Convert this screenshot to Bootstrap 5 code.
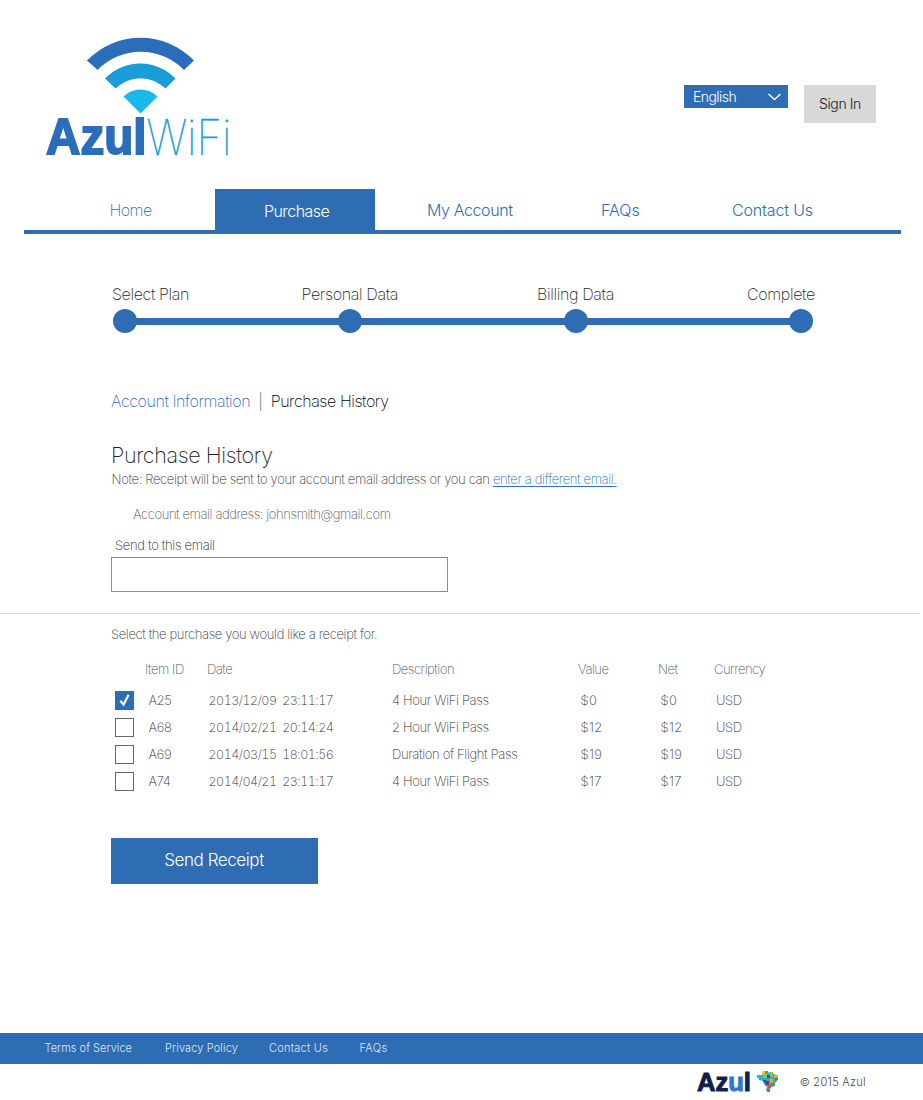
<!DOCTYPE html>
<html lang="en">
<head>
<meta charset="utf-8">
<meta name="viewport" content="width=device-width, initial-scale=1">
<title>Azul WiFi – Purchase History</title>
<link href="https://cdn.jsdelivr.net/npm/bootstrap@5.3.0/dist/css/bootstrap.min.css" rel="stylesheet">
<script src="https://cdn.jsdelivr.net/npm/bootstrap@5.3.0/dist/js/bootstrap.bundle.min.js"></script>
<style>
  :root { --azul: #2e6db4; }
  body { font: 200 13px/20px Inter, "Liberation Sans", sans-serif; letter-spacing: -.34px; color: #222; min-height: 1100px; }
  svg { overflow: visible; }
  .site-header { height: 189px; padding: 36px 47px 0 44px; }
  .lang-btn { width: 104px; height: 23px; background: var(--azul); color: #fff; font-size: 14px; font-weight: 300; letter-spacing: -.55px; padding: 0 6px 1px 9px; border: 0; border-radius: 0; margin-top: 49px; }
  .sign-btn { width: 72px; height: 38px; background: #d8d8d8; color: #222; font-size: 14px; font-weight: 300; letter-spacing: -.38px; border: 0; border-radius: 0; padding: 0 0 2px 0; margin-top: 49px; }
  .main-nav { height: 45px; margin: 0 22px 0 24px; border-bottom: 4px solid var(--azul); }
  .main-nav .nav-link { padding: 10px 0 0; font-size: 16px; line-height: 22px; font-weight: 300; color: var(--azul); }
  .nav-home { width: 191px; text-indent: 85.5px; font-weight: 200 !important; letter-spacing: -.57px; }
  .nav-purchase { width: 160px; background: var(--azul); text-indent: 49px; letter-spacing: -.56px; padding-top: 11px !important; color: #fff !important; }
  .nav-account { width: 226px; text-indent: 52px; letter-spacing: -.4px; }
  .nav-faq { width: 131px; letter-spacing: .05px; }
  .nav-contact { letter-spacing: -.15px; }
  .steps { margin: 49px 110px 0 112px; }
  .step-labels { display: grid; grid-template-columns: 189.5px 235.5px 210px auto; font-size: 16px; line-height: 22px; }
  .step-labels span { letter-spacing: -.35px; }
  .step-track { height: 24px; margin: 4px 0 0 1px; background: linear-gradient(var(--azul), var(--azul)) 12px 9px / 676px 7px no-repeat; width: 700px; }
  .step-dot { width: 24px; height: 24px; border-radius: 50%; background: var(--azul); }
  .page-body { padding: 0 110px 0 111px; }
  .sub-nav { font-size: 16px; line-height: 22px; margin-top: 57px; letter-spacing: -.42px; }
  .sub-sep { width: 20.5px; padding-left: 8px; color: #444; opacity: .9; }
  .link-azul { color: #2e6dc4; }
  .page-title { font-size: 21.5px; line-height: 28px; font-weight: 200; margin: 29px 0 0; letter-spacing: -.36px; }
  .note { margin: 0 0 0 .5px; letter-spacing: -.325px; color: #333; }
  .note a { letter-spacing: -.36px; text-underline-offset: 2px; }
  .account-line { margin: 15px 0 0 22px; color: #555; letter-spacing: -.395px; }
  .email-label { margin: 11px 0 0 4px; letter-spacing: -.3px; }
  .email-input { width: 337px; height: 35px; border: 1px solid #8b8b8b; border-radius: 0; margin-top: 2px; }
  .divider { height: 1px; background: #dcdcdc; margin: 21px 3px 0 0; }
  .select-note { margin-top: 10px; letter-spacing: -.36px; color: #333; }
  .receipts { table-layout: fixed; width: 660px; margin: 15px 0 0; }
  .receipts td, .receipts th { height: 27px; line-height: 20px; padding: 3px 0 4px; color: #333; font-weight: 200; white-space: pre; background: none; }
  .receipts th { height: 28px; padding: 0 0 8px; color: #555; letter-spacing: -.47px; }
  .receipts td:first-child { padding-top: 4px; padding-bottom: 3px; }
  .receipts td:nth-child(n+5) { padding-left: 2.5px; }
  .receipts td:nth-child(7) { padding-left: 2px; }
  .receipts td:nth-child(2) { padding-left: 3.5px; }
  .receipts .when { padding: 4px 0 3px 1.5px; font-size: 12.5px; font-variant-numeric: tabular-nums; letter-spacing: -.5px; }
  .receipts .amount { letter-spacing: .4px; }
  .form-check-input.box { display: block; width: 19px; height: 19px; margin: 0 0 0 4px; border: 1px solid #666; border-radius: 0; }
  .form-check-input.box:checked { background-color: var(--azul); border-color: var(--azul); background-size: 19px; background-position: center;
    background-image: url("data:image/svg+xml,%3Csvg xmlns='http://www.w3.org/2000/svg' viewBox='0 0 19 19'%3E%3Cpath d='M5.3 9.7 8.6 13.6 13.6 3.8' fill='none' stroke='%23fff' stroke-width='2.1'/%3E%3C/svg%3E"); }
  .send-btn { width: 207px; height: 46px; background: var(--azul); color: #fff; font-size: 17px; font-weight: 300; letter-spacing: -.42px; border: 0; border-radius: 0; padding: 0 1px 0 0; margin-top: 43px; }
  .foot-bar { height: 31px; background: var(--azul); padding-left: 44.5px; font-size: 11px; font-weight: 300; letter-spacing: .03px; line-height: 30px; }
  .foot-bar a { color: #dbe8f6; }
  .foot-bar a:nth-child(1) { width: 120.5px; }
  .foot-bar a:nth-child(2) { width: 104px; letter-spacing: .12px; }
  .foot-bar a:nth-child(3) { width: 90.5px; letter-spacing: .24px; }
  .foot-bar a:nth-child(4) { letter-spacing: .4px; }
  .foot-end { height: 35px; padding-right: 57px; font-size: 11px; letter-spacing: .3px; font-weight: 300; color: #444; margin-bottom: 1px; }
  .foot-logo { margin-left: 696px; }
</style>
</head>
<body class="d-flex flex-column bg-white">
<header class="site-header d-flex align-items-start">
  <svg width="190" height="124" viewBox="44 36 190 124" role="img" aria-label="Azul WiFi">
    <path d="M87 60.500A74.500 74.500 0 0 1 194 60.500L184 70A60.500 60.500 0 0 0 97.500 70Z" fill="#2a6ebb"/>
    <path d="M105 78.500A49 49 0 0 1 175.500 78.500L165.500 88.500A35.500 35.500 0 0 0 115.500 88.500Z" fill="#1a9cd8"/>
    <path d="M123.500 96.500A24 24 0 0 1 157.500 96.500L140.500 113.500Z" fill="#18b8ea"/>
    <text x="46" y="154" font-family="Liberation Sans" font-weight="700" font-size="50" letter-spacing="0" textLength="100.500" lengthAdjust="spacingAndGlyphs" fill="#2a6ebb" stroke="#2a6ebb" stroke-width="1.900">Azul</text>
    <text x="146.500" y="154.500" font-family="Inter" font-weight="100" font-size="49.500" letter-spacing="0" textLength="85" lengthAdjust="spacingAndGlyphs" fill="#1a9cd8" stroke="#1a9cd8" stroke-width=".6">WiFi</text>
  </svg>
  <button class="btn lang-btn ms-auto me-3 d-flex align-items-center justify-content-between" type="button">English
    <svg width="15" height="9" viewBox="0 0 15 9"><path d="M1.500 2 7.500 7.500 13.500 2" fill="none" stroke="#fff" stroke-width="1.400"/></svg>
  </button>
  <button class="btn sign-btn" type="button">Sign In</button>
</header>
<nav class="nav main-nav flex-nowrap">
  <a class="nav-link nav-home" href="#">Home</a>
  <a class="nav-link nav-purchase" href="#">Purchase</a>
  <a class="nav-link nav-account" href="#">My Account</a>
  <a class="nav-link nav-faq" href="#">FAQs</a>
  <a class="nav-link nav-contact" href="#">Contact Us</a>
</nav>
<section class="steps">
  <div class="step-labels"><span>Select Plan</span><span>Personal Data</span><span>Billing Data</span><span>Complete</span></div>
  <div class="step-track d-flex justify-content-between"><i class="step-dot"></i><i class="step-dot"></i><i class="step-dot"></i><i class="step-dot"></i></div>
</section>
<main class="flex-grow-1">
  <div class="page-body">
    <div class="sub-nav d-flex"><a href="#" class="link-azul text-decoration-none">Account Information</a><span class="sub-sep">|</span><span class="text-black">Purchase History</span></div>
    <h1 class="page-title">Purchase History</h1>
    <p class="note">Note: Receipt will be sent to your account email address or you can <a href="#" class="link-azul">enter a different email.</a></p>
    <p class="account-line">Account email address: johnsmith@gmail.com</p>
    <label class="email-label d-block" for="email">Send to this email</label>
    <input id="email" type="email" class="form-control email-input">
  </div>
  <div class="divider"></div>
  <div class="page-body">
    <p class="select-note mb-0">Select the purchase you would like a receipt for.</p>
    <table class="table table-borderless receipts">
      <colgroup><col style="width:34px"><col style="width:62px"><col style="width:185px"><col style="width:186px"><col style="width:80px"><col style="width:56px"><col></colgroup>
      <thead><tr><th></th><th>Item ID</th><th>Date</th><th>Description</th><th>Value</th><th>Net</th><th>Currency</th></tr></thead>
      <tbody>
        <tr><td><input class="form-check-input box" type="checkbox" checked></td><td>A25</td><td class="when">2013/12/09  23:11:17</td><td>4 Hour WiFi Pass</td><td class="amount">$0</td><td class="amount">$0</td><td>USD</td></tr>
        <tr><td><input class="form-check-input box" type="checkbox"></td><td>A68</td><td class="when">2014/02/21  20:14:24</td><td>2 Hour WiFi Pass</td><td class="amount">$12</td><td class="amount">$12</td><td>USD</td></tr>
        <tr><td><input class="form-check-input box" type="checkbox"></td><td>A69</td><td class="when">2014/03/15  18:01:56</td><td>Duration of Flight Pass</td><td class="amount">$19</td><td class="amount">$19</td><td>USD</td></tr>
        <tr><td><input class="form-check-input box" type="checkbox"></td><td>A74</td><td class="when">2014/04/21  23:11:17</td><td>4 Hour WiFi Pass</td><td class="amount">$17</td><td class="amount">$17</td><td>USD</td></tr>
      </tbody>
    </table>
    <button class="btn send-btn" type="button">Send Receipt</button>
  </div>
</main>
<footer>
  <div class="foot-bar d-flex">
    <a href="#" class="text-decoration-none">Terms of Service</a>
    <a href="#" class="text-decoration-none">Privacy Policy</a>
    <a href="#" class="text-decoration-none">Contact Us</a>
    <a href="#" class="text-decoration-none">FAQs</a>
  </div>
  <div class="foot-end d-flex align-items-center justify-content-end">
    <svg class="foot-logo me-auto" width="84" height="28" viewBox="696 1067 84 28" role="img" aria-label="Azul">
      <text x="697" y="1090" font-family="Liberation Sans" font-weight="700" font-size="25.500" letter-spacing="0" textLength="54" lengthAdjust="spacingAndGlyphs" fill="#101f4b" stroke="#101f4b" stroke-width="1">Az<tspan fill="#3179c8" stroke="#3179c8">u</tspan>l</text>
      <path d="M762 1070h6l1 3h6v3h3l-1 4-2 2v3l-4 1-1 3-2 2-2-2 1-3-3-3-1-3-4-1-1-5h4z" fill="#29a9dc"/>
      <path d="M757 1074h5v3h-5z" fill="#2cb5cf"/>
      <path d="M762 1070h3v4h-3z" fill="#f0c62d"/>
      <path d="M763 1073h4v4h-4zM769 1071h4v5h-4z" fill="#8cc63f"/>
      <path d="M767 1074h3v3h-3zM763 1079h3v2h-3z" fill="#2855a4"/>
      <path d="M774 1074h4v3h-4zM770 1078h3v4h-3z" fill="#f7a823"/>
      <path d="M775 1077h3v2h-3z" fill="#e63d2f"/>
      <path d="M765 1080h4v4h-4z" fill="#8a2a82"/>
      <path d="M771 1082h3v3h-3z" fill="#37a24b"/>
      <path d="M768 1084h3v3h-3zM767 1088h3v3h-3z" fill="#ee4b2d"/>
    </svg>
    <span>© 2015 Azul</span>
  </div>
</footer>
</body>
</html>
